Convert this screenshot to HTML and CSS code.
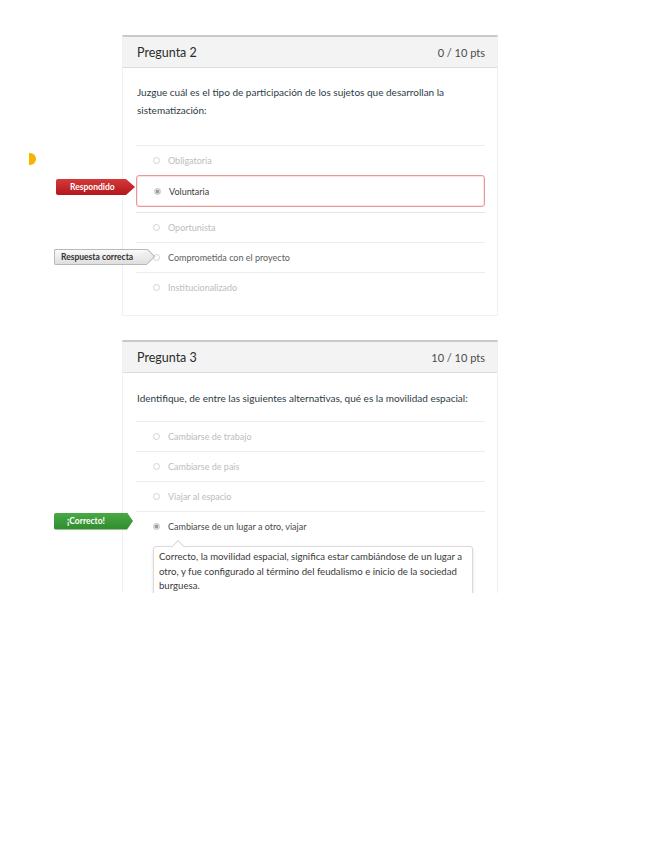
FILE: index.html
```html
<!DOCTYPE html>
<html lang="es">
<head>
<meta charset="utf-8">
<title>Quiz</title>
<link rel="stylesheet" href="styles.css">
</head>
<body>
<div class="page">
  <span class="marker"></span>

  <section class="quiz">
    <header class="qhead">
      <span class="qtitle">Pregunta 2</span>
      <span class="qpts">0 / 10 pts</span>
    </header>
    <div class="qbody">
      <p class="qtext q2text">Juzgue cuál es el tipo de participación de los sujetos que desarrollan la sistematización:</p>
      <ul class="answers">
        <li class="ans faint"><span class="radio"></span>Obligatoria</li>
        <li class="ans chosen wrong"><span class="tag tag-red">Respondido</span><span class="radio on"></span>Voluntaria</li>
        <li class="ans faint"><span class="radio"></span>Oportunista</li>
        <li class="ans mid"><span class="tag tag-grey">Respuesta correcta</span><span class="radio"></span>Comprometida con el proyecto</li>
        <li class="ans faint"><span class="radio"></span>Institucionalizado</li>
      </ul>
    </div>
  </section>

  <section class="quiz q3">
    <header class="qhead">
      <span class="qtitle">Pregunta 3</span>
      <span class="qpts">10 / 10 pts</span>
    </header>
    <div class="qbody">
      <p class="qtext q3text">Identifique, de entre las siguientes alternativas, qué es la movilidad espacial:</p>
      <ul class="answers">
        <li class="ans faint"><span class="radio"></span>Cambiarse de trabajo</li>
        <li class="ans faint"><span class="radio"></span>Cambiarse de pais</li>
        <li class="ans faint"><span class="radio"></span>Viajar al espacio</li>
        <li class="ans dark"><span class="tag tag-green">¡Correcto!</span><span class="radio on"></span>Cambiarse de un lugar a otro, viajar</li>
      </ul>
      <div class="feedback">Correcto, la movilidad espacial, significa estar cambiándose de un lugar a otro, y fue configurado al término del feudalismo e inicio de la sociedad burguesa.</div>
    </div>
  </section>
</div>
</body>
</html>
```
FILE: styles.css
```css
* { box-sizing: border-box; }
html, body { margin: 0; padding: 0; background: #fff; }
body { font-family: Lato, "Open Sans", "Liberation Sans", sans-serif; color: #2d3b45; }

.page {
  position: relative;
  height: 593px;
  overflow: hidden;
  padding: 35px 0 0 122px;
}

.marker {
  position: absolute;
  left: 29px;
  top: 153px;
  width: 7px;
  height: 12px;
  background: #f4b400;
  border-radius: 0 7px 7px 0;
}

.quiz {
  width: 376px;
  border: 1px solid #f0f0f0;
  border-top: 2px solid #c9c9c9;
  background: #fff;
}
.quiz.q3 { margin-top: 24px; }

.qhead {
  display: flex;
  justify-content: space-between;
  align-items: center;
  height: 31px;
  padding: 0 12px 0 14px;
  background: #f3f3f3;
  border-bottom: 1px solid #dcdcdc;
}
.qtitle { font-size: 12.5px; color: #2b2b2b; }
.qpts { font-size: 11px; color: #4a4a4a; }

.qbody { padding: 0 12px 13px 13px; }

.qtext {
  margin: 0;
  font-size: 10px;
  line-height: 18px;
  color: #2d3b45;
}
.q2text { padding: 15px 30px 0 1px; height: 77px; }
.q3text { padding: 16px 0 0 1px; height: 48px; }

.answers { list-style: none; margin: 0; padding: 0; }

.ans {
  position: relative;
  display: flex;
  align-items: center;
  height: 30px;
  padding-left: 17px;
  border-top: 1px solid #ececec;
  font-size: 9px;
  color: #b5b5b5;
}
.ans .radio {
  width: 7px;
  height: 7px;
  margin-right: 8px;
  border: 1px solid #d4d4d4;
  border-radius: 50%;
  background: #fff;
}
.ans .radio.on {
  border-color: #c4c4c4;
  background: radial-gradient(circle, #9a9a9a 0 1.5px, #dcdcdc 2px);
}
.ans.faint { color: #bdbdbd; }
.ans.mid { color: #5c5c5c; }
.ans.dark { color: #4a4a4a; }

.ans.chosen.wrong {
  height: 32px;
  margin-bottom: 5px;
  border: 1px solid #e79a9a;
  border-radius: 3px;
  box-shadow: inset 0 0 0 1px #fbe3e3;
  color: #404040;
}
.ans.chosen.wrong + .ans { border-top-color: #e6e6e6; }

.tag {
  position: absolute;
  top: 50%;
  height: 16px;
  font-size: 8.5px;
  line-height: 16px;
  border-radius: 2px 0 0 2px;
  white-space: nowrap;
}
.tag-red {
  left: -81px;
  width: 79px;
  margin-top: -12px;
  padding-left: 14px;
  background: linear-gradient(#d33a3a, #b5161c);
  color: #fff;
  font-weight: bold;
  clip-path: polygon(0 0, 70px 0, 79px 50%, 70px 100%, 0 100%);
}
.tag-grey {
  left: -82px;
  width: 93px;
  margin-top: -9px;
  height: 16px;
  padding-left: 6px;
  color: #333;
  font-weight: bold;
  background: linear-gradient(#fafafa, #dedede);
  border: 1px solid #b9b9b9;
  border-right: none;
  line-height: 14px;
}
.tag-grey::after {
  content: "";
  position: absolute;
  right: -6px;
  top: 1.5px;
  width: 10px;
  height: 10px;
  border-top: 1px solid #b9b9b9;
  border-right: 1px solid #b9b9b9;
  background: linear-gradient(135deg, #f3f3f3, #e2e2e2);
  transform: rotate(45deg);
}
.tag-green {
  left: -82px;
  width: 79px;
  margin-top: -14px;
  height: 17px;
  line-height: 17px;
  padding-left: 13px;
  background: linear-gradient(#49aa45, #2f8b2e);
  color: #fff;
  font-weight: bold;
  clip-path: polygon(0 0, 73px 0, 79px 50%, 73px 100%, 0 100%);
}

.feedback {
  position: relative;
  margin: 5px 12px 0 17px;
  padding: 3px 8px 4px 5px;
  border: 1px solid #dadada;
  border-radius: 3px;
  box-shadow: 0 1px 3px rgba(0,0,0,0.12);
  font-size: 9.6px;
  line-height: 14.5px;
  color: #3a3a3a;
  background: #fff;
}
.feedback::before {
  content: "";
  position: absolute;
  left: 19px;
  top: -5px;
  width: 9px;
  height: 9px;
  background: #fff;
  border-top: 1px solid #dadada;
  border-left: 1px solid #dadada;
  transform: rotate(45deg);
}
```
